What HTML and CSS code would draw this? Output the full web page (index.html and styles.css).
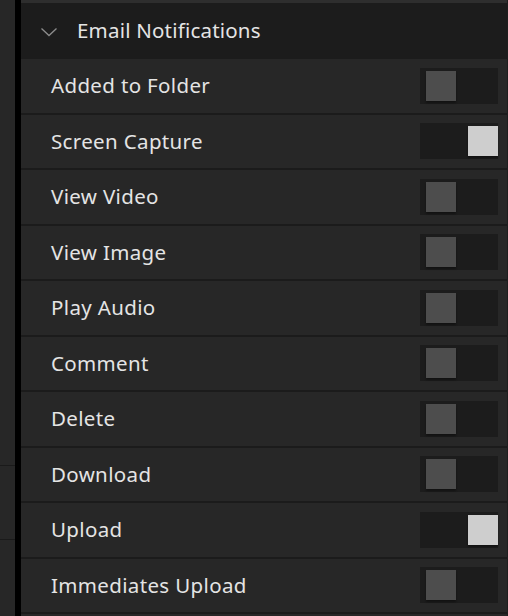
FILE: index.html
```html
<!DOCTYPE html>
<html lang="en">
<head>
    <meta charset="UTF-8">
    <meta name="viewport" content="width=device-width, initial-scale=1.0">
    <title>Email Notifications</title>
    <link rel="stylesheet" href="styles.css">
</head>
<body>
    <div class="side">
        <div class="side-block side-top"></div>
        <div class="side-block side-mid"></div>
        <div class="side-block side-rest"></div>
    </div>
    <div class="gutter"></div>
    <div class="panel">
        <div class="panel-header">
            <!-- collapse chevron -->
            <svg class="chevron" width="18" height="10" viewBox="0 0 18 10" fill="none" xmlns="http://www.w3.org/2000/svg">
                <path d="M1.5 1.5l7.5 7 7.5-7" stroke="#8c8c8c" stroke-width="1.3"></path>
            </svg>
            <span class="header-title">Email Notifications</span>
        </div>
        <div class="row"><span class="label">Added to Folder</span><span class="toggle"><span class="knob"></span></span></div>
        <div class="row"><span class="label">Screen Capture</span><span class="toggle on"><span class="knob"></span></span></div>
        <div class="row"><span class="label">View Video</span><span class="toggle"><span class="knob"></span></span></div>
        <div class="row"><span class="label">View Image</span><span class="toggle"><span class="knob"></span></span></div>
        <div class="row"><span class="label">Play Audio</span><span class="toggle"><span class="knob"></span></span></div>
        <div class="row"><span class="label">Comment</span><span class="toggle"><span class="knob"></span></span></div>
        <div class="row"><span class="label">Delete</span><span class="toggle"><span class="knob"></span></span></div>
        <div class="row"><span class="label">Download</span><span class="toggle"><span class="knob"></span></span></div>
        <div class="row"><span class="label">Upload</span><span class="toggle on"><span class="knob"></span></span></div>
        <div class="row"><span class="label">Immediates Upload</span><span class="toggle"><span class="knob"></span></span></div>
    </div>
</body>
</html>
```

FILE: styles.css
```css
body {
    margin: 0;
    height: 616px;
    overflow: hidden;
    display: flex;
    background-color: #272727;
    font-family: 'Noto Sans', 'Lato', sans-serif;
    color: #e4e4e4;
}

/* left column, mostly empty */
.side {
    width: 15px;
    display: flex;
    flex-direction: column;
}
.side-block {
    background-color: #272727;
}
.side-top {
    height: 465px;
    border-bottom: 1px solid #1a1a1a;
}
.side-mid {
    height: 73px;
    border-bottom: 1px solid #1a1a1a;
}
.side-rest {
    flex: 1;
}

.gutter {
    width: 6px;
    background-color: #000;
}

.panel {
    flex: 1;
    display: flex;
    flex-direction: column;
    border-right: 1px solid #1e1e1e;
}

.panel-header {
    height: 56px;
    margin-top: 3px;
    display: flex;
    align-items: center;
    background-color: #1c1c1c;
    box-shadow: 0 -3px 0 #2e2e2e;
}
.chevron {
    margin-left: 19px;
    margin-right: 19px;
    margin-top: 2px;
}
.header-title {
    font-size: 20.5px;
    letter-spacing: 0.2px;
    margin-top: -3px;
}

.row {
    height: 53.5px;
    border-bottom: 2px solid #1b1b1b;
    display: flex;
    align-items: center;
    justify-content: space-between;
    background-color: #272727;
}
.label {
    margin-left: 30px;
    font-size: 20.5px;
    letter-spacing: 0.35px;
    margin-top: -1px;
}

.toggle {
    width: 78px;
    height: 36px;
    margin-right: 9px;
    background-color: #1c1c1c;
    display: flex;
    align-items: flex-start;
    justify-content: flex-start;
}
.knob {
    width: 30px;
    height: 30px;
    margin-top: 3px;
    margin-left: 6px;
    background-color: #4d4d4d;
    box-shadow: 0 2px 2px rgba(0, 0, 0, 0.35);
}
.toggle.on {
    justify-content: flex-end;
}
.toggle.on .knob {
    margin-left: 0;
    background-color: #cecece;
}
```
